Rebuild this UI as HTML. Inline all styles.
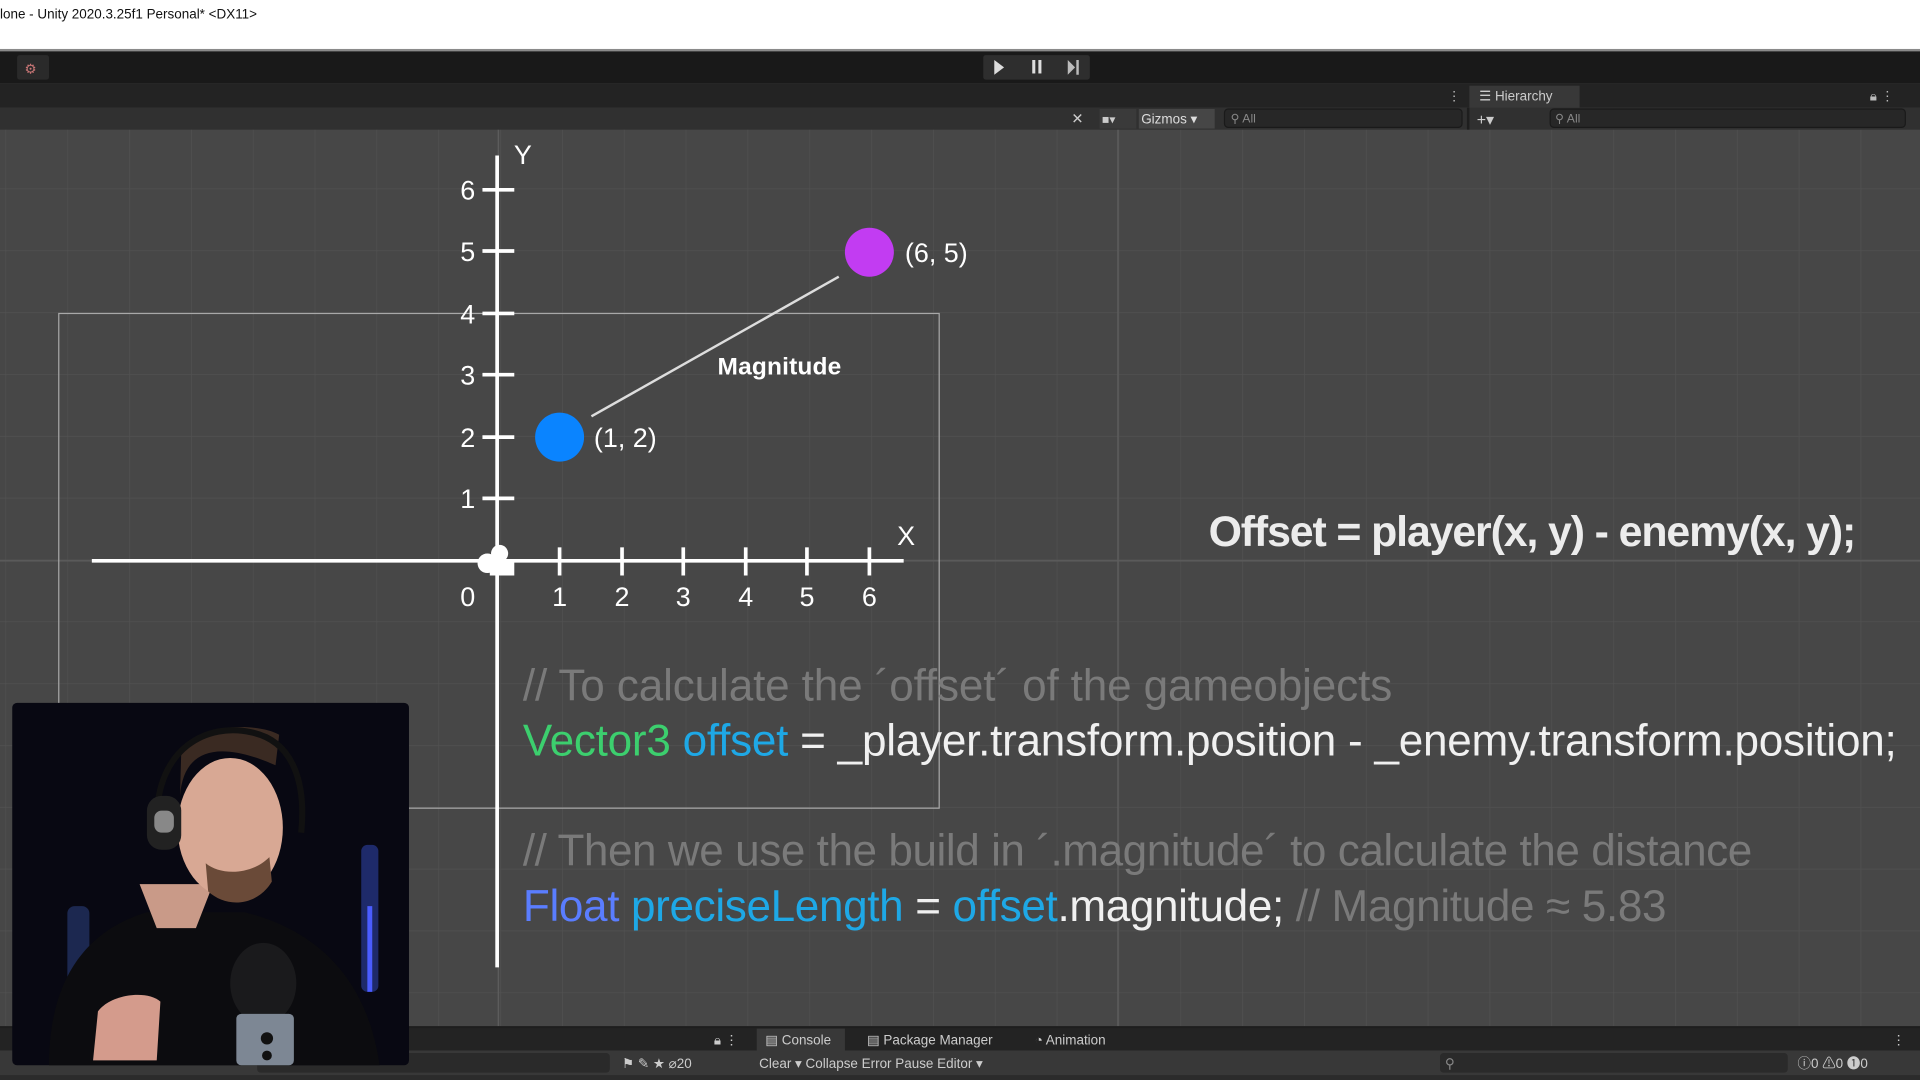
<!DOCTYPE html>
<html><head><meta charset="utf-8"><style>
html,body{margin:0;padding:0;background:#474747;overflow:hidden}
svg{display:block}
text{font-family:"Liberation Sans",sans-serif}
</style></head><body>
<svg width="1920" height="1080" viewBox="0 0 1568 882" xmlns="http://www.w3.org/2000/svg">
<defs>
<pattern id="grid" x="4.5" y="2.5" width="50.5" height="50.5" patternUnits="userSpaceOnUse">
<path d="M0 0H50.5M0 0V50.5" stroke="#525252" stroke-width="1" fill="none"/>
</pattern>
</defs>
<rect x="0" y="0" width="1568" height="40" fill="#ffffff"/>
<text x="0" y="15" font-size="11" fill="#111">lone - Unity 2020.3.25f1 Personal* &lt;DX11&gt;</text>
<rect x="0" y="40" width="1568" height="2" fill="#8a8a8a"/>
<rect x="0" y="42" width="1568" height="26" fill="#191919"/>
<rect x="14" y="45" width="26" height="20" rx="2" fill="#2a2a2a"/>
<text x="20" y="60" font-size="11" fill="#c77">⚙</text>
<rect x="803" y="45" width="87" height="20" rx="2" fill="#2e2e2e"/>
<path d="M812 49l8 6-8 6z" fill="#ddd"/>
<rect x="843" y="49" width="2.5" height="11" fill="#ddd"/><rect x="848" y="49" width="2.5" height="11" fill="#ddd"/>
<path d="M872 49l6 6-6 6z M879 49h2v12h-2z" fill="#bbb"/>
<rect x="0" y="68" width="1568" height="20" fill="#232323"/>
<rect x="1200" y="70" width="90" height="18" fill="#383838"/>
<text x="1208" y="82" font-size="11" fill="#ccc">☰ Hierarchy</text>
<text x="1182" y="82" font-size="11" fill="#bbb">⋮</text>
<text x="1527" y="82" font-size="11" fill="#bbb">🔒︎ ⋮</text>
<rect x="0" y="88" width="1568" height="18" fill="#303030"/>
<text x="875" y="101" font-size="12" fill="#ccc">✕</text>
<rect x="898" y="89" width="30" height="16" fill="#3a3a3a"/>
<text x="900" y="101" font-size="10" fill="#ccc">■▾</text>
<rect x="930" y="89" width="62" height="16" fill="#464646"/>
<text x="932" y="101" font-size="11" fill="#ddd">Gizmos ▾</text>
<rect x="1000" y="89" width="194" height="15" rx="3" fill="#272727" stroke="#1a1a1a"/>
<text x="1005" y="100" font-size="10" fill="#888">⚲ All</text>
<rect x="1198" y="88" width="2" height="18" fill="#1e1e1e"/>
<text x="1206" y="102" font-size="13" fill="#ccc">+▾</text>
<rect x="1266" y="89" width="290" height="15" rx="3" fill="#272727" stroke="#1a1a1a"/>
<text x="1270" y="100" font-size="10" fill="#888">⚲ All</text>
<rect x="0" y="106" width="1568" height="732" fill="#474747"/>
<rect x="0" y="106" width="1568" height="732" fill="url(#grid)"/>
<line x1="913" y1="106" x2="913" y2="838" stroke="#5c5c5c" stroke-width="1.2"/>
<line x1="407" y1="106" x2="407" y2="838" stroke="#5c5c5c" stroke-width="1.2"/>
<line x1="0" y1="458" x2="1568" y2="458" stroke="#5c5c5c" stroke-width="1.2"/>
<rect x="48" y="256" width="719" height="404" fill="none" stroke="#a8a8a8" stroke-width="1"/>
<g stroke="#fff" stroke-width="3">
<line x1="406" y1="127" x2="406" y2="790"/>
<line x1="75" y1="458" x2="738" y2="458"/>
<line x1="394" y1="155" x2="420" y2="155"/><line x1="394" y1="205" x2="420" y2="205"/>
<line x1="394" y1="256" x2="420" y2="256"/><line x1="394" y1="306" x2="420" y2="306"/>
<line x1="394" y1="357" x2="420" y2="357"/><line x1="394" y1="407" x2="420" y2="407"/>
<line x1="457" y1="447" x2="457" y2="470"/><line x1="508" y1="447" x2="508" y2="470"/>
<line x1="558" y1="447" x2="558" y2="470"/><line x1="609" y1="447" x2="609" y2="470"/>
<line x1="659" y1="447" x2="659" y2="470"/><line x1="710" y1="447" x2="710" y2="470"/>
</g>
<circle cx="398" cy="460" r="8" fill="#fff"/><circle cx="408" cy="452" r="7" fill="#fff"/><rect x="400" y="458" width="20" height="12" fill="#fff"/>
<g font-size="22" fill="#fff" text-anchor="middle">
<text x="382" y="163">6</text><text x="382" y="213">5</text><text x="382" y="264">4</text>
<text x="382" y="314">3</text><text x="382" y="365">2</text><text x="382" y="415">1</text>
<text x="382" y="495">0</text><text x="457" y="495">1</text><text x="508" y="495">2</text>
<text x="558" y="495">3</text><text x="609" y="495">4</text><text x="659" y="495">5</text><text x="710" y="495">6</text>
<text x="427" y="134">Y</text><text x="740" y="445">X</text>
</g>
<line x1="483" y1="340" x2="685" y2="226" stroke="#ddd" stroke-width="2"/>
<circle cx="710" cy="206" r="20" fill="#c23cf2"/>
<circle cx="457" cy="357" r="20" fill="#0a84ff"/>
<text x="739" y="214" font-size="22" fill="#fff">(6, 5)</text>
<text x="485" y="365" font-size="22" fill="#fff">(1, 2)</text>
<text x="586" y="306" font-size="20" font-weight="bold" fill="#fff" textLength="101">Magnitude</text>
<text x="987" y="446" font-size="35" font-weight="bold" fill="#ececec" textLength="529">Offset = player(x, y) - enemy(x, y);</text>
<text x="427" y="572" font-size="36" fill="#7a7a7a" textLength="710">// To calculate the ´offset´ of the gameobjects</text>
<text x="427" y="617" font-size="36" fill="#f0f0f0" textLength="1122"><tspan fill="#3ccf6e">Vector3</tspan> <tspan fill="#1ea8e6">offset</tspan> = _player.transform.position - _enemy.transform.position;</text>
<text x="427" y="707" font-size="36" fill="#7a7a7a" textLength="1004">// Then we use the build in ´.magnitude´ to calculate the distance</text>
<text x="427" y="752" font-size="36" fill="#f0f0f0" textLength="934"><tspan fill="#5a7dff">Float</tspan> <tspan fill="#1ea8e6">preciseLength</tspan> = <tspan fill="#1ea8e6">offset</tspan>.magnitude; <tspan fill="#7a7a7a">// Magnitude ≈ 5.83</tspan></text>
<rect x="0" y="838" width="1568" height="2" fill="#1e1e1e"/>
<rect x="0" y="840" width="1568" height="18" fill="#232323"/>
<rect x="618" y="840" width="72" height="18" fill="#383838"/>
<g font-size="11" fill="#ccc">
<text x="583" y="853">🔒︎ ⋮</text>
<text x="625" y="853">▤ Console</text>
<text x="708" y="853">▤ Package Manager</text>
<text x="845" y="853">◔ Animation</text>
<text x="1545" y="853">⋮</text>
</g>
<rect x="0" y="858" width="1568" height="24" fill="#383838"/>
<rect x="210" y="860" width="288" height="16" rx="3" fill="#2a2a2a"/>
<rect x="1176" y="860" width="284" height="16" rx="3" fill="#2a2a2a"/>
<g font-size="11" fill="#ccc">
<text x="508" y="872">⚑  ✎  ★  ⌀20</text>
<text x="620" y="872">Clear ▾  Collapse  Error Pause  Editor ▾</text>
<text x="1180" y="872" fill="#888">⚲</text>
<text x="1468" y="872">ⓘ0  ⚠0  ❶0</text>
</g>
<rect x="0" y="878" width="1568" height="4" fill="#2b2b2b"/>
<rect x="10" y="574" width="324" height="296" rx="4" fill="#080812"/>
<g>
<rect x="55" y="740" width="18" height="70" rx="6" fill="#1c2850"/>
<rect x="295" y="690" width="14" height="120" rx="5" fill="#1e2a6a"/>
<rect x="300" y="740" width="4" height="70" fill="#4a5cff"/>
<path d="M40 870 C40 800 70 760 120 745 L200 745 C260 760 300 800 310 870 Z" fill="#0c0c0f"/>
<path d="M114 722 L174 722 L160 758 L128 758 Z" fill="#c99a88"/>
<ellipse cx="188" cy="676" rx="43" ry="57" fill="#d8a894"/>
<path d="M147 650 C150 610 180 605 225 625 L228 600 C210 590 160 590 148 615 Z" fill="#3a2a22"/>
<path d="M170 728 C185 742 210 740 222 720 L220 700 C205 715 180 715 168 705 Z" fill="#6a4a38"/>
<path d="M128 670 C128 610 170 590 205 598 C240 605 250 640 246 680" fill="none" stroke="#111" stroke-width="5"/>
<rect x="120" y="650" width="28" height="44" rx="12" fill="#222"/>
<rect x="126" y="662" width="16" height="18" rx="6" fill="#888"/>
<path d="M76 866 L80 826 C90 812 120 808 131 818 L128 866 Z" fill="#d49b8c"/>
<ellipse cx="215" cy="803" rx="27" ry="33" fill="#1a1a1c"/>
<rect x="193" y="828" width="47" height="42" rx="4" fill="#7d8794"/>
<circle cx="218" cy="848" r="5" fill="#111"/><circle cx="218" cy="862" r="4" fill="#111"/>
</g>
</svg>
</body></html>
